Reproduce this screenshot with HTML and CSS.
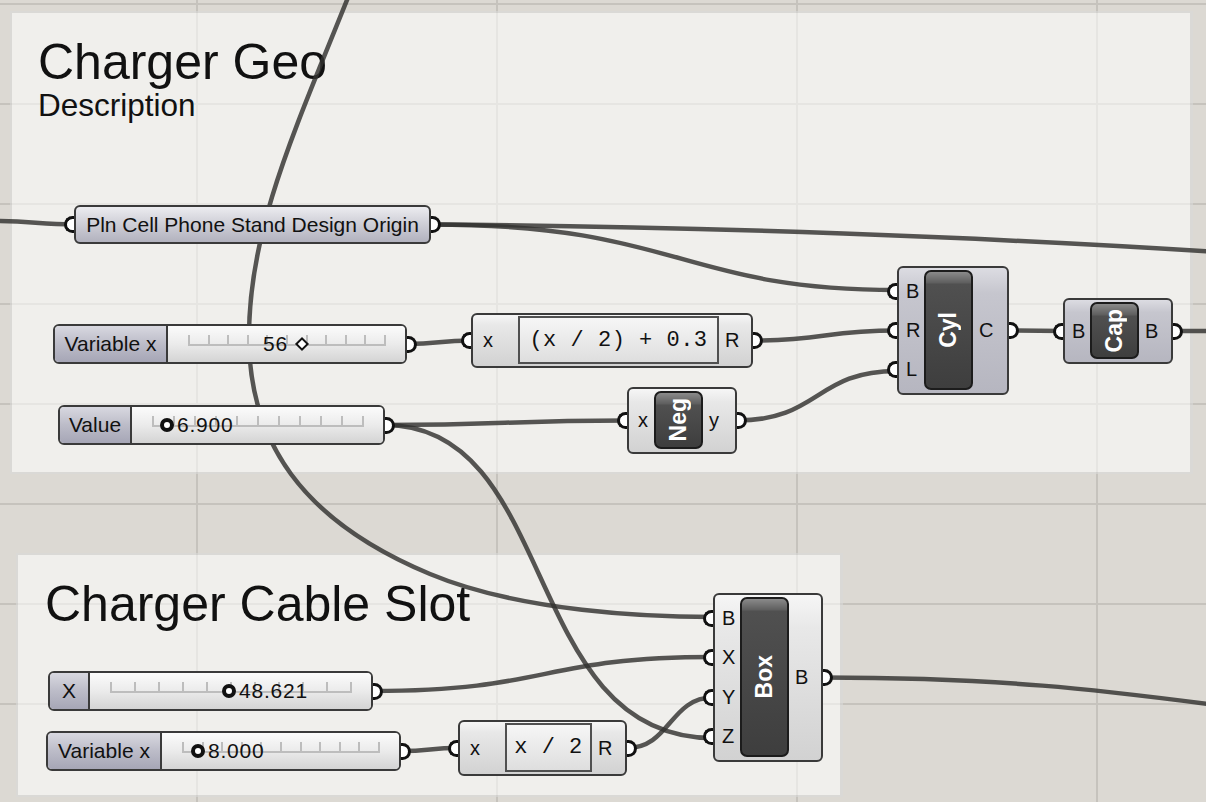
FILE: index.html
```html
<!DOCTYPE html>
<html lang="en">
<head>
    <meta charset="UTF-8">
    <title>Charger Geo - Grasshopper</title>
    <link rel="stylesheet" href="styles.css">
</head>
<body>
    <div class="canvas">
        <div class="group group-geo">
            <div class="group-title">Charger Geo</div>
            <div class="group-desc">Description</div>
        </div>
        <div class="group group-slot">
            <div class="group-title">Charger Cable Slot</div>
        </div>

        <svg class="wires" width="1206" height="802" viewBox="0 0 1206 802">
            <path d="M -10 221 C 30 221, 40 224.5, 74 224.5"/>
            <path d="M 431 224.5 C 700 226, 1000 238, 1216 252"/>
            <path d="M 431 224.5 C 680 224.5, 680 290, 897 290"/>
            <path d="M 349 -5 C 295 130, 248 230, 249 340 C 250 440, 300 520, 430 574 C 521 612, 650 617, 713 617"/>
            <path d="M 407 344 C 440 344, 438 340.5, 471 340.5"/>
            <path d="M 753 340.5 C 825 340.5, 825 330.5, 897 330.5"/>
            <path d="M 385 425 C 505 425, 505 420.5, 627 420.5"/>
            <path d="M 385 425 C 560 425, 520 738, 713 738"/>
            <path d="M 737 420.5 C 820 420.5, 815 371, 897 371"/>
            <path d="M 1009 330.5 L 1063 331"/>
            <path d="M 1173 331 L 1216 331"/>
            <path d="M 373 691 C 550 691, 540 657, 713 657"/>
            <path d="M 401 751 C 430 751, 430 748, 458 748"/>
            <path d="M 627 748 C 670 748, 670 697.6, 713 697.6"/>
            <path d="M 823 677.5 C 1000 677.5, 1100 690, 1216 705"/>
        </svg>

        <!-- Charger Geo -->
        <div class="node param n-origin">
            <span class="grip in"></span>
            Pln Cell Phone Stand Design Origin
            <span class="grip out"></span>
        </div>

        <div class="node slider n-varx">
            <div class="slider-label">Variable x</div>
            <div class="slider-track">
                <div class="rail"><i></i><i></i><i></i><i></i><i></i><i></i><i></i><i></i><i></i><i></i><i></i></div>
                <div class="slider-value" style="margin-left: 95px">56<span class="diamond"></span></div>
            </div>
            <span class="grip out"></span>
        </div>

        <div class="node slider n-value">
            <div class="slider-label">Value</div>
            <div class="slider-track">
                <div class="rail"><i></i><i></i><i></i><i></i><i></i><i></i><i></i><i></i><i></i><i></i><i></i></div>
                <div class="slider-value" style="margin-left: 28px"><span class="knob"></span>6.900</div>
            </div>
            <span class="grip out"></span>
        </div>

        <div class="node comp expr n-expr1">
            <div class="ports in"><div class="port">x<span class="grip in"></span></div></div>
            <div class="expr-box">(x / 2) + 0.3</div>
            <div class="ports out"><div class="port">R<span class="grip out"></span></div></div>
        </div>

        <div class="node comp n-neg">
            <div class="ports in"><div class="port">x<span class="grip in"></span></div></div>
            <div class="icon"><span>Neg</span></div>
            <div class="ports out"><div class="port">y<span class="grip out"></span></div></div>
        </div>

        <div class="node comp gray n-cyl">
            <div class="ports in">
                <div class="port">B<span class="grip in"></span></div>
                <div class="port">R<span class="grip in"></span></div>
                <div class="port">L<span class="grip in"></span></div>
            </div>
            <div class="icon"><span>Cyl</span></div>
            <div class="ports out"><div class="port">C<span class="grip out"></span></div></div>
        </div>

        <div class="node comp gray n-cap">
            <div class="ports in"><div class="port">B<span class="grip in"></span></div></div>
            <div class="icon"><span>Cap</span></div>
            <div class="ports out"><div class="port">B<span class="grip out"></span></div></div>
        </div>

        <!-- Charger Cable Slot -->
        <div class="node slider n-x">
            <div class="slider-label">X</div>
            <div class="slider-track">
                <div class="rail"><i></i><i></i><i></i><i></i><i></i><i></i><i></i><i></i><i></i><i></i><i></i></div>
                <div class="slider-value" style="margin-left: 132px"><span class="knob"></span>48.621</div>
            </div>
            <span class="grip out"></span>
        </div>

        <div class="node slider n-varx2">
            <div class="slider-label">Variable x</div>
            <div class="slider-track">
                <div class="rail"><i></i><i></i><i></i><i></i><i></i><i></i><i></i><i></i><i></i><i></i><i></i></div>
                <div class="slider-value" style="margin-left: 29px"><span class="knob"></span>8.000</div>
            </div>
            <span class="grip out"></span>
        </div>

        <div class="node comp expr n-expr2">
            <div class="ports in"><div class="port">x<span class="grip in"></span></div></div>
            <div class="expr-box">x / 2</div>
            <div class="ports out"><div class="port">R<span class="grip out"></span></div></div>
        </div>

        <div class="node comp n-box">
            <div class="ports in">
                <div class="port">B<span class="grip in"></span></div>
                <div class="port">X<span class="grip in"></span></div>
                <div class="port">Y<span class="grip in"></span></div>
                <div class="port">Z<span class="grip in"></span></div>
            </div>
            <div class="icon"><span>Box</span></div>
            <div class="ports out"><div class="port">B<span class="grip out"></span></div></div>
        </div>
    </div>
</body>
</html>
```

FILE: styles.css
```css
body {
    margin: 0;
    font-family: "Liberation Sans", Arial, sans-serif;
    color: #111;
}

.canvas {
    position: relative;
    width: 1206px;
    height: 802px;
    overflow: hidden;
    background-color: #dcd9d3;
    background-image:
        linear-gradient(to right, #c6c3bd 2px, transparent 2px),
        linear-gradient(to bottom, #c6c3bd 2px, transparent 2px);
    background-size: 300px 100%, 100% 100px;
    background-position: 196px 0, 0 3px;
}

/* groups */
.group {
    position: absolute;
    box-sizing: border-box;
    background: rgba(255, 255, 255, 0.57);
    border: 2px solid rgba(0, 0, 0, 0.09);
    border-right-width: 3px;
    padding: 24px 0 0 26px;
}

.group-geo {
    left: 10px;
    top: 11px;
    width: 1183px;
    height: 463px;
}

.group-slot {
    left: 16px;
    top: 553px;
    width: 827px;
    height: 244px;
    padding-left: 27px;
}

.group-title {
    font-size: 50px;
    line-height: 50px;
}

.group-desc {
    font-size: 31.5px;
    line-height: 30px;
    margin-top: 3px;
}

/* wires */
.wires {
    position: absolute;
    left: 0;
    top: 0;
}

.wires path {
    fill: none;
    stroke: rgba(50, 50, 48, 0.82);
    stroke-width: 4.5;
}

/* nodes */
.node {
    position: absolute;
    box-sizing: border-box;
    border: 2px solid #3a3a3a;
    border-radius: 6px;
    display: flex;
}

.grip {
    position: absolute;
    top: 50%;
    width: 10px;
    height: 17px;
    margin-top: -8.5px;
    box-sizing: border-box;
    border: 3.5px solid #111;
    background: #fff;
}

.grip.in {
    left: -12px;
    border-right: 0;
    border-radius: 9px 0 0 9px;
}

.grip.out {
    right: -12px;
    border-left: 0;
    border-radius: 0 9px 9px 0;
}

.param {
    align-items: center;
    justify-content: center;
    font-size: 21px;
    background: linear-gradient(#ececf0, #d0d0d8 45%, #b2b2be);
}

.n-origin {
    left: 74px;
    top: 205px;
    width: 357px;
    height: 39px;
}

/* sliders */
.slider {
    height: 40px;
}

.slider-label {
    box-sizing: border-box;
    border-right: 2px solid #3a3a3a;
    border-radius: 4px 0 0 4px;
    display: flex;
    align-items: center;
    justify-content: center;
    font-size: 21px;
    background: linear-gradient(#d8d8e0, #bcbcc8 50%, #a6a6b6);
}

.slider-track {
    flex: 1;
    display: grid;
    border-radius: 0 4px 4px 0;
    background: linear-gradient(#fbfbfb, #ebebeb 50%, #d4d4d4);
}

.slider-track > * {
    grid-area: 1 / 1;
}

.rail {
    align-self: start;
    margin: 8px 19px 0 20px;
    height: 10px;
    display: flex;
    justify-content: space-between;
    align-items: flex-end;
    border-bottom: 2px solid #bdbdbd;
}

.rail i {
    width: 2px;
    height: 9px;
    background: #bdbdbd;
}

.slider-value {
    align-self: center;
    justify-self: start;
    display: flex;
    align-items: center;
    gap: 3px;
    font-size: 21px;
    letter-spacing: 0.8px;
}

.knob {
    width: 14px;
    height: 14px;
    box-sizing: border-box;
    border: 4px solid #111;
    border-radius: 50%;
    background: #fff;
}

.diamond {
    width: 10px;
    height: 10px;
    margin-left: 6px;
    box-sizing: border-box;
    border: 2.5px solid #111;
    background: #fff;
    transform: rotate(45deg);
}

.n-varx { left: 53px; top: 324px; width: 354px; }
.n-varx .slider-label { width: 113px; }
.n-value { left: 58px; top: 405px; width: 327px; }
.n-value .slider-label { width: 72px; }
.n-x { left: 48px; top: 671px; width: 325px; }
.n-x .slider-label { width: 40px; }
.n-varx2 { left: 46px; top: 731px; width: 355px; }
.n-varx2 .slider-label { width: 114px; }

/* components */
.comp {
    background: linear-gradient(#f6f6f6, #e8e8e8 20%, #d2d2d2);
    font-size: 20px;
}

.comp.gray {
    background: linear-gradient(#dcdce2, #c6c6ce 20%, #b6b6c0);
}

.ports {
    display: flex;
    flex-direction: column;
}

.ports.in {
    width: 25px;
    padding: 4px 0;
    box-sizing: border-box;
}

.ports.in .port {
    padding-left: 7px;
}

.ports.out {
    flex: 1;
}

.ports.out .port {
    padding-left: 6px;
}

.port {
    flex: 1;
    position: relative;
    display: flex;
    align-items: center;
}

.icon {
    width: 49px;
    margin: 2px 0 3px;
    box-sizing: border-box;
    border: 2px solid #1c1c1c;
    border-radius: 7px;
    background: linear-gradient(#8a8a8a, #5e5e5e 11px, #505050 12px, #3e3e3e);
    display: flex;
    align-items: center;
    justify-content: center;
}

.icon span {
    writing-mode: vertical-rl;
    transform: rotate(180deg);
    color: #fff;
    font-weight: bold;
    font-size: 23px;
}

.expr .ports.in {
    width: 45px;
}

.expr .ports.in .port {
    padding-left: 10px;
}

.expr-box {
    margin: 1px 0 2px;
    box-sizing: border-box;
    border: 2px solid #505050;
    background: linear-gradient(#f6f6f6, #dedede);
    display: flex;
    align-items: center;
    justify-content: center;
    font-family: "Liberation Mono", "Courier New", monospace;
    font-size: 22px;
    letter-spacing: 0.5px;
}

.n-expr1 { left: 471px; top: 313px; width: 282px; height: 55px; }
.n-expr1 .expr-box { width: 201px; }
.n-expr2 { left: 458px; top: 720px; width: 169px; height: 56px; }
.n-expr2 .expr-box { width: 87px; }

.n-neg { left: 627px; top: 387px; width: 110px; height: 67px; }
.n-neg .ports.in .port { padding-left: 9px; }
.n-cyl { left: 897px; top: 266px; width: 112px; height: 129px; }
.n-cap { left: 1063px; top: 298px; width: 110px; height: 66px; }
.n-box { left: 713px; top: 593px; width: 110px; height: 169px; }
```
